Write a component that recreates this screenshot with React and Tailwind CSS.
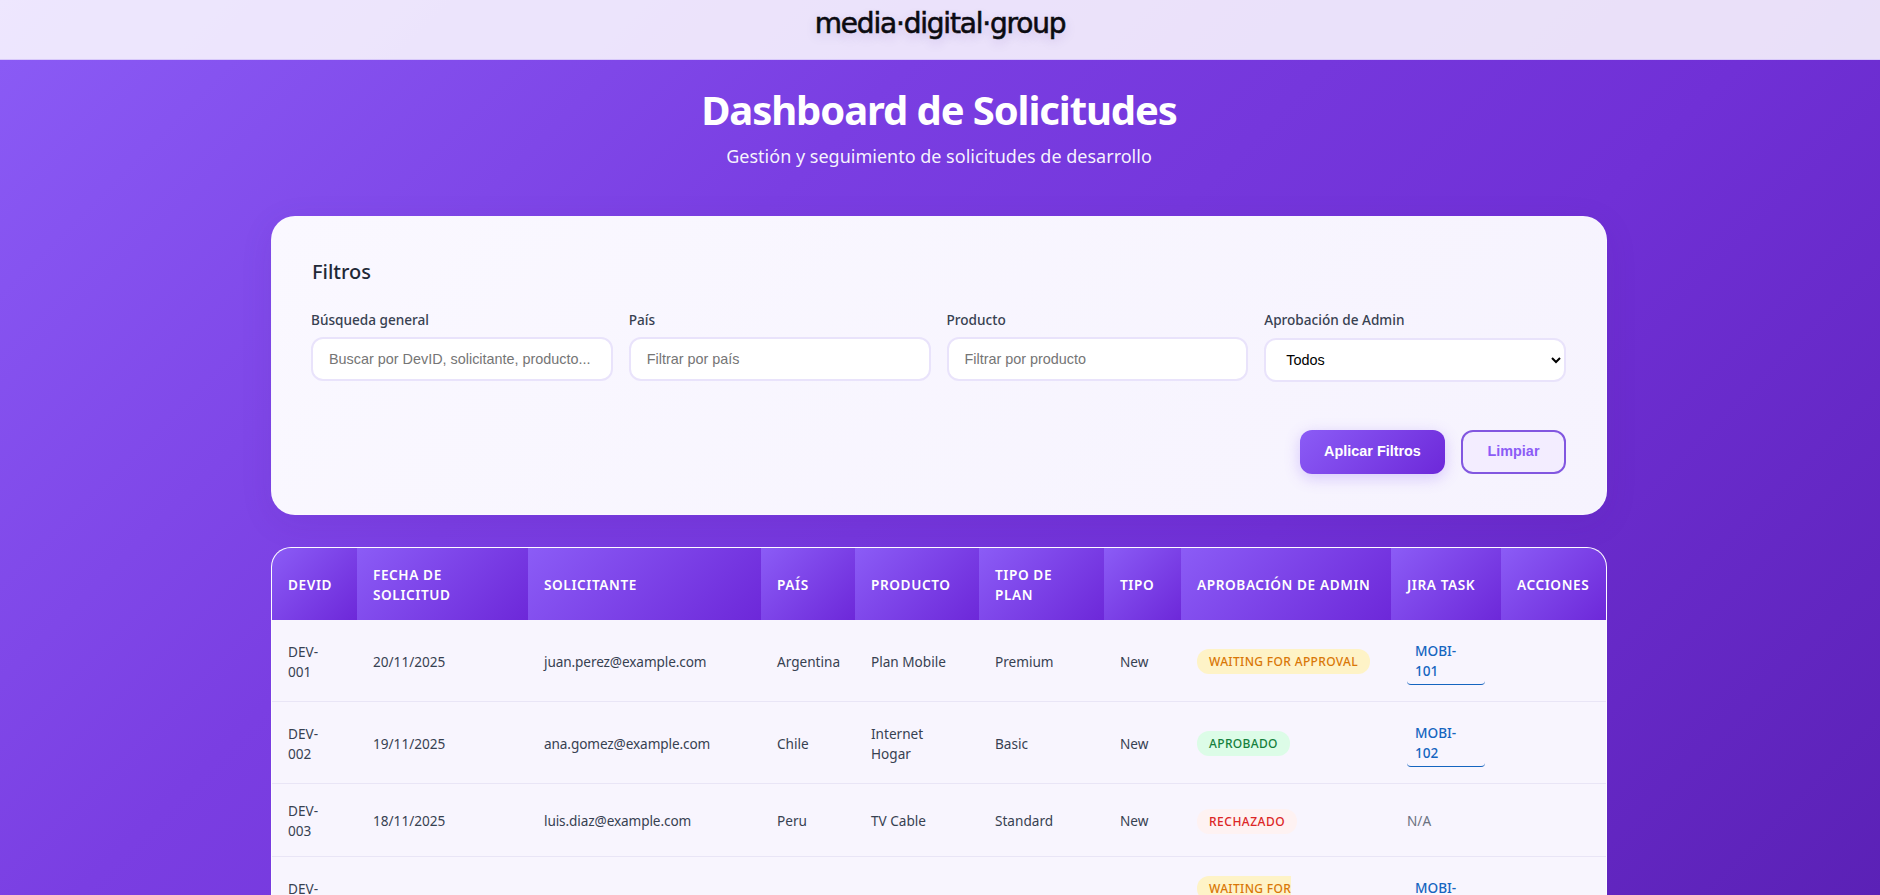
const cols = [
  { label: "DevID", w: "w-[85px]" },
  { label: "Fecha de Solicitud", w: "w-[171px]" },
  { label: "Solicitante", w: "w-[233px]" },
  { label: "País", w: "w-[94px]" },
  { label: "Producto", w: "w-[124px]" },
  { label: "Tipo de Plan", w: "w-[125px]" },
  { label: "Tipo", w: "w-[77px]" },
  { label: "Aprobación de Admin", w: "w-[210px]" },
  { label: "Jira Task", w: "w-[110px]" },
  { label: "Acciones", w: "w-[105px]" },
];

const rows = [
  { id: "DEV-001", date: "20/11/2025", mail: "juan.perez@example.com", country: "Argentina", product: "Plan Mobile", plan: "Premium", type: "New", status: "waiting", jira: "MOBI-101" },
  { id: "DEV-002", date: "19/11/2025", mail: "ana.gomez@example.com", country: "Chile", product: "Internet Hogar", plan: "Basic", type: "New", status: "ok", jira: "MOBI-102" },
  { id: "DEV-003", date: "18/11/2025", mail: "luis.diaz@example.com", country: "Peru", product: "TV Cable", plan: "Standard", type: "New", status: "no", jira: null },
  { id: "DEV-004", date: "", mail: "", country: "", product: "", plan: "", type: "", status: "wrap", jira: "MOBI-104" },
];

function Badge({ status }) {
  const base = "inline rounded-[12px] px-3 py-1 text-[12px] leading-5 font-medium uppercase";
  if (status === "waiting") return <span className={`${base} tracking-[0.35px] whitespace-nowrap bg-[#fef3c7] text-[#d97706]`}>Waiting for Approval</span>;
  if (status === "ok") return <span className={`${base} tracking-[0.35px] bg-[#dcfce7] text-[#15803d]`}>Aprobado</span>;
  if (status === "no") return <span className={`${base} tracking-[0.5px] bg-[#fef2f2] text-[#dc2626]`}>Rechazado</span>;
  return <span className={`${base} tracking-[0.35px] bg-[#fef3c7] text-[#d97706]`}>Waiting for<br />Approval</span>;
}

function Field({ label, children }) {
  return (
    <div className="flex flex-col">
      <label className="mb-2 text-[13.6px] leading-[18px] font-medium text-[#374151]">{label}</label>
      {children}
    </div>
  );
}

const inputClass = "h-[44px] w-full rounded-[12px] border-2 border-[#e9e3fb] bg-white px-4 font-['Liberation_Sans',sans-serif] text-[14.4px] text-black placeholder:text-[#757575] outline-none";
const cell = "px-4 pt-[17px] pb-[15px]";

export default function App() {
  return (
    <div className="h-screen overflow-hidden bg-[linear-gradient(135deg,#8b5cf6_0%,#7a3ee2_35%,#7030d6_65%,#5b21b6_100%)] font-['Noto_Sans',sans-serif] text-[#1f2937]">
      <header className="flex h-[60px] justify-center border-b border-[#d8c8fb] bg-white/85">
        <span className="mt-[5px] font-['DejaVu_Sans',sans-serif] text-[28px] leading-[38px] font-normal tracking-[-1.2px] text-[#0b0b10] [-webkit-text-stroke:0.6px_#0b0b10] [text-shadow:0_4px_12px_rgba(60,20,140,0.18)]">
          media·digital·group
        </span>
      </header>

      <main className="ml-[271px] w-[1336px]">
        <div className="pt-[24px] pb-[48px] text-center text-white">
          <h1 className="text-[40px] leading-[52px] font-bold tracking-[-1.1px]">Dashboard de Solicitudes</h1>
          <p className="mt-[8px] text-[18px] leading-[24px] text-white/95">Gestión y seguimiento de solicitudes de desarrollo</p>
        </div>

        <section className="h-[299px] rounded-[24px] border border-white/20 bg-[linear-gradient(135deg,#faf8ff,#f6f3fe)] pr-[40px] pl-[39px] pt-[41px] shadow-[0_8px_32px_rgba(76,29,149,0.1)]">
          <h2 className="ml-px text-[20px] leading-[28px] font-medium text-[#1f2937]">Filtros</h2>
          <div className="mt-[25px] grid grid-cols-4 gap-4">
            <Field label="Búsqueda general">
              <input className={inputClass} placeholder="Buscar por DevID, solicitante, producto..." />
            </Field>
            <Field label="País">
              <input className={inputClass} placeholder="Filtrar por país" />
            </Field>
            <Field label="Producto">
              <input className={inputClass} placeholder="Filtrar por producto" />
            </Field>
            <Field label="Aprobación de Admin">
              <select className={`${inputClass} mt-px`} defaultValue="Todos">
                <option>Todos</option>
                <option>Aprobado</option>
                <option>Rechazado</option>
              </select>
            </Field>
          </div>
          <div className="mt-[48px] flex justify-end gap-4">
            <button className="h-[44px] w-[145px] rounded-[12px] bg-[linear-gradient(135deg,#8b5cf6_0%,#6d28d9_100%)] font-['Liberation_Sans',sans-serif] text-[14.4px] font-bold text-white shadow-[0_4px_15px_rgba(139,92,246,0.3)]">
              Aplicar Filtros
            </button>
            <button className="h-[44px] w-[105px] rounded-[12px] border-2 border-[#8257e0] bg-[#f3edff] font-['Liberation_Sans',sans-serif] text-[14.4px] font-bold text-[#8b5cf6]">
              Limpiar
            </button>
          </div>
        </section>

        <section className="mt-[32px] overflow-hidden rounded-[20px] border border-white/70 bg-[#f8f5fe]">
          <table className="w-full table-fixed border-collapse text-[13.6px] leading-5 text-[#374151]">
            <thead>
              <tr>
                {cols.map((c) => (
                  <th key={c.label} className={`${c.w} ${cell} bg-[linear-gradient(135deg,#8b5cf6_0%,#6d28d9_100%)] text-left font-semibold text-white uppercase tracking-[0.6px]`}>
                    {c.label}
                  </th>
                ))}
              </tr>
            </thead>
            <tbody>
              {rows.map((r) => (
                <tr key={r.id} className="border-b border-[#e9e5f6]">
                  <td className={cell}>{r.id}</td>
                  <td className={cell}>{r.date}</td>
                  <td className={`${cell} tracking-[-0.1px]`}>{r.mail}</td>
                  <td className={cell}>{r.country}</td>
                  <td className={cell}>{r.product}</td>
                  <td className={cell}>{r.plan}</td>
                  <td className={cell}>{r.type}</td>
                  <td className={cell}><Badge status={r.status} /></td>
                  <td className="p-4">
                    {r.jira ? (
                      <a className="block rounded-[4px] border-b border-[#1565c0] px-2 pt-[5px] pb-[3px] font-medium text-[#1565c0]">{r.jira}</a>
                    ) : (
                      <span className="relative top-px text-[#6b7280]">N/A</span>
                    )}
                  </td>
                  <td className={cell}></td>
                </tr>
              ))}
            </tbody>
          </table>
        </section>
      </main>
    </div>
  );
}
